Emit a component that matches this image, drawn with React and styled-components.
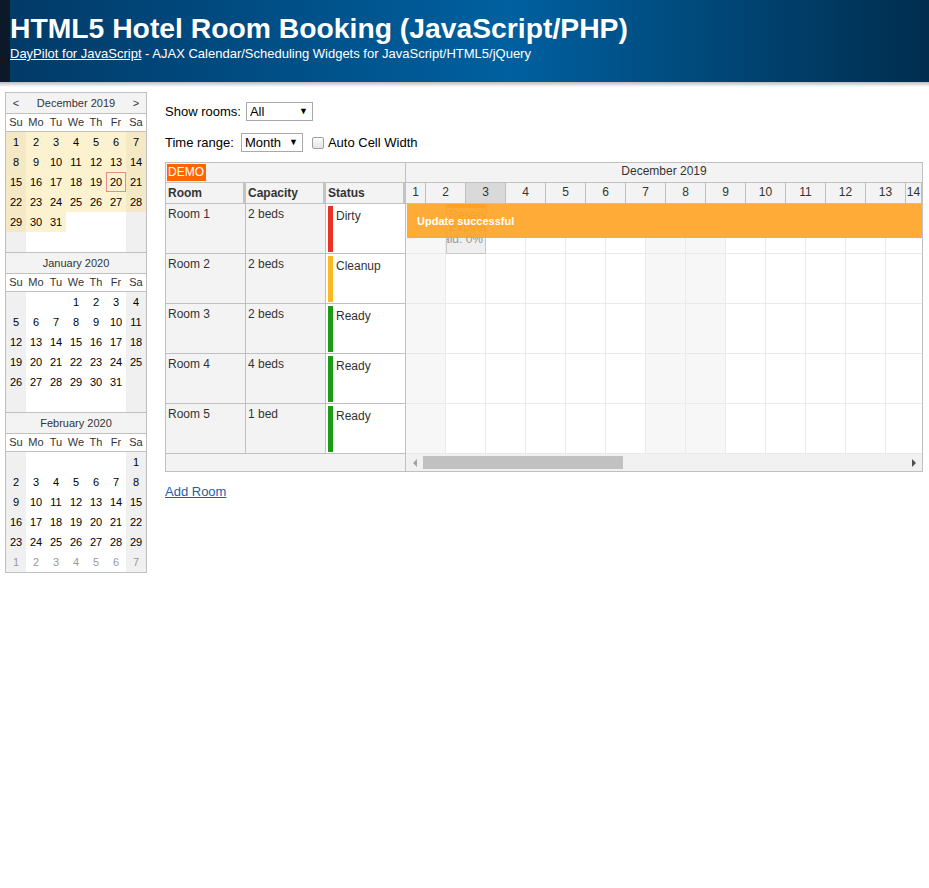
import React from 'react';
import styled, { createGlobalStyle } from 'styled-components';

const GlobalStyle = createGlobalStyle`
  body {
    margin: 0;
    background: #fff;
    color: #000;
    font-family: "Liberation Sans", Arial, sans-serif;
    font-size: 13px;
  }
`;

const FONT = '"Liberation Sans", Arial, sans-serif';

/* ---------- header ---------- */

const Header = styled.header`
  height: 82px;
  box-sizing: border-box;
  padding: 12px 10px 0 10px;
  color: #fff;
  background: linear-gradient(
    to right,
    #0b1929 0,
    #0b1929 10px,
    #023a68 10px,
    #004f86 30%,
    #0060a0 55%,
    #004676 78%,
    #002d4e 100%
  );
`;

const Title = styled.h1`
  margin: 0;
  font-size: 28.3px;
  line-height: 32px;
  font-weight: bold;
`;

const Subtitle = styled.div`
  margin-top: 2px;
  font-size: 13px;
  line-height: 15px;

  a {
    color: #fff;
    text-decoration: underline;
  }
`;

const HeaderShadow = styled.div`
  height: 5px;
  background: linear-gradient(#bcbcbc, #fff);
`;

/* ---------- layout ---------- */

const Main = styled.div`
  display: flex;
  align-items: flex-start;
  gap: 18px;
  padding: 5px 0 0 5px;
`;

const Content = styled.div`
  display: flex;
  flex-direction: column;
  align-items: flex-start;
  padding-top: 10px;
`;

/* ---------- navigator ---------- */

const Nav = styled.div`
  width: 142px;
  box-sizing: border-box;
  border: 1px solid #c0c0c0;
  font-size: 11px;
`;

const Month = styled.div`
  & + & {
    border-top: 1px solid #c0c0c0;
  }
`;

const MonthTitle = styled.div`
  display: grid;
  grid-template-columns: 20px 1fr 20px;
  align-items: center;
  height: 20px;
  background: #f3f3f3;
  color: #333;
  text-align: center;
`;

const NavArrow = styled.span`
  color: #333;
  font-size: 11px;
`;

const DowRow = styled.div`
  display: grid;
  grid-template-columns: repeat(7, 20px);
  height: 17px;
  line-height: 17px;
  border-top: 1px solid #c0c0c0;
  border-bottom: 1px solid #c0c0c0;
  background: #fff;
  color: #333;
  text-align: center;
`;

const DaysGrid = styled.div`
  display: grid;
  grid-template-columns: repeat(7, 20px);
  grid-auto-rows: 20px;
`;

const DayCell = styled.div`
  line-height: 20px;
  text-align: center;
  box-sizing: border-box;
  background: ${({ $bg }) => $bg};
  color: ${({ $muted }) => ($muted ? '#999' : '#000')};
  box-shadow: ${({ $today }) => ($today ? 'inset 0 0 0 1px #ee8a8a' : 'none')};
`;

const months = [
  { title: 'December 2019', start: 0, days: 31, selected: true, arrows: true },
  { title: 'January 2020', start: 3, days: 31 },
  { title: 'February 2020', start: 6, days: 29, trailing: true },
];

const dows = ['Su', 'Mo', 'Tu', 'We', 'Th', 'Fr', 'Sa'];

const cellBg = (weekend, inMonth, selected) => {
  if (selected && inMonth) return weekend ? '#f5e8c4' : '#fdf2d0';
  return weekend ? '#f0f0f0' : '#fff';
};

const NavMonth = ({ m }) => {
  const cells = [];
  for (let i = 0; i < 42; i++) {
    const d = i - m.start + 1;
    const weekend = i % 7 === 0 || i % 7 === 6;
    const inMonth = d >= 1 && d <= m.days;
    let label = '';
    let muted = false;
    if (inMonth) label = d;
    else if (m.trailing && d > m.days) {
      label = d - m.days;
      muted = true;
    }
    cells.push(
      <DayCell
        key={i}
        $bg={cellBg(weekend, inMonth, m.selected)}
        $muted={muted}
        $today={m.selected && d === 20}
      >
        {label}
      </DayCell>
    );
  }
  return (
    <Month>
      <MonthTitle>
        <NavArrow>{m.arrows ? '<' : ''}</NavArrow>
        <span>{m.title}</span>
        <NavArrow>{m.arrows ? '>' : ''}</NavArrow>
      </MonthTitle>
      <DowRow>
        {dows.map((d) => (
          <span key={d}>{d}</span>
        ))}
      </DowRow>
      <DaysGrid>{cells}</DaysGrid>
    </Month>
  );
};

/* ---------- toolbar ---------- */

const ToolRow = styled.div`
  display: flex;
  align-items: center;
  gap: ${({ $gap }) => $gap}px;
  height: 19px;
  margin-bottom: ${({ $mb }) => $mb}px;
`;

const Label = styled.span`
  margin-right: ${({ $mr }) => $mr || 0}px;
`;

const SelectWrap = styled.span`
  position: relative;
  display: inline-block;

  &::after {
    content: '▼';
    position: absolute;
    right: 5px;
    top: 4px;
    font-size: 9px;
    color: #000;
    pointer-events: none;
  }
`;

const Select = styled.select`
  appearance: none;
  -webkit-appearance: none;
  box-sizing: border-box;
  width: ${({ $w }) => $w}px;
  height: 19px;
  margin: 0;
  padding: 0 0 0 3px;
  border: 1px solid #a9a9a9;
  border-radius: 0;
  background: #fff;
  color: #000;
  font-family: ${FONT};
  font-size: 13px;
`;

const Check = styled.input`
  appearance: none;
  -webkit-appearance: none;
  box-sizing: border-box;
  width: 12px;
  height: 12px;
  margin: 0 0 0 5px;
  border: 1px solid #a0a0a0;
  border-radius: 2px;
  background: linear-gradient(#fcfcfc, #e4e4e4);
`;

/* ---------- scheduler ---------- */

const Scheduler = styled.div`
  width: 758px;
  box-sizing: border-box;
  border: 1px solid #c0c0c0;
  display: grid;
  grid-template-columns: 240px 516px;
  grid-template-rows: 20px 21px 250px 17px;
  font-size: 12px;
  color: #333;
`;

const Corner = styled.div`
  box-sizing: border-box;
  padding: 1px;
  background: #f3f3f3;
  border-right: 1px solid #c0c0c0;
  border-bottom: 1px solid #c0c0c0;
`;

const Demo = styled.span`
  display: inline-block;
  padding: 0 2px 0 1px;
  line-height: 17px;
  background: #ff6600;
  color: #fff;
`;

const TimeTop = styled.div`
  box-sizing: border-box;
  background: #f3f3f3;
  border-bottom: 1px solid #c0c0c0;
  text-align: center;
  line-height: 16px;
`;

const ColHeaders = styled.div`
  display: flex;
  border-bottom: 1px solid #c0c0c0;
  background: #f3f3f3;
`;

const ColHeader = styled.div`
  flex: 0 0 80px;
  box-sizing: border-box;
  padding-left: 2px;
  border-right: 3px solid #c4c4c4;
  font-weight: bold;
  line-height: 20px;
`;

const DayHeaders = styled.div`
  display: flex;
  overflow: hidden;
  border-bottom: 1px solid #c0c0c0;
`;

const DayHeader = styled.div`
  flex: 0 0 ${({ $w }) => $w}px;
  box-sizing: border-box;
  border-right: 1px solid #c0c0c0;
  background: ${({ $hot }) => ($hot ? '#d9d9d9' : '#f3f3f3')};
  text-align: center;
  line-height: 18px;
`;

const RowHeaders = styled.div`
  display: flex;
  flex-direction: column;
`;

const RoomRow = styled.div`
  display: flex;
  height: 50px;
  box-sizing: border-box;
  border-bottom: 1px solid #c0c0c0;
`;

const RoomCell = styled.div`
  flex: 0 0 80px;
  box-sizing: border-box;
  padding: 3px 0 0 2px;
  border-right: 1px solid #c0c0c0;
  background: #f3f3f3;
`;

const StatusCell = styled.div`
  flex: 0 0 80px;
  box-sizing: border-box;
  display: flex;
  gap: 3px;
  padding: 2px 0 1px 2px;
  border-right: 1px solid #c0c0c0;
  background: #fff;
`;

const StatusBar = styled.div`
  flex: 0 0 5px;
  background: ${({ $color }) => $color};
`;

const StatusText = styled.div`
  padding-top: 3px;
`;

const Canvas = styled.div`
  position: relative;
  overflow: hidden;
  display: flex;
  flex-direction: column;
`;

const GridRow = styled.div`
  display: flex;
  height: 50px;
  box-sizing: border-box;
  border-bottom: 1px solid #eaeaea;
`;

const GridCell = styled.div`
  flex: 0 0 40px;
  box-sizing: border-box;
  border-right: 1px solid #eaeaea;
  background: ${({ $weekend }) => ($weekend ? '#f7f7f7' : '#fff')};
`;

const Event = styled.div`
  position: absolute;
  left: 40px;
  top: 0;
  width: 40px;
  height: 50px;
  box-sizing: border-box;
  overflow: hidden;
  border: 1px solid #c8c8c8;
  border-top: 4px solid #ff9a2a;
  background: #efefef;
  color: #999;
  padding: 1px 2px 0 2px;
  line-height: 12px;
  font-size: 12px;
`;

const EventLine = styled.div`
  display: flex;
  justify-content: ${({ $right }) => ($right ? 'flex-end' : 'flex-start')};
  white-space: nowrap;
`;

const Toast = styled.div`
  position: absolute;
  left: 1px;
  right: 0;
  top: 0;
  height: 34px;
  padding-left: 10px;
  background: rgba(255, 162, 34, 0.9);
  color: #fff;
  font-weight: bold;
  font-size: 11px;
  line-height: 34px;
`;

const ScrollCorner = styled.div`
  box-sizing: border-box;
  background: #f3f3f3;
  border-right: 1px solid #c0c0c0;
`;

const ScrollBar = styled.div`
  display: flex;
  align-items: center;
  background: #f1f1f1;
`;

const ScrollBtn = styled.div`
  flex: 0 0 17px;
  display: flex;
  align-items: center;
  justify-content: center;
`;

const Thumb = styled.div`
  flex: 0 0 200px;
  height: 13px;
  background: #c1c1c1;
`;

const Spacer = styled.div`
  flex: 1;
`;

const AddLink = styled.a`
  margin-top: 12px;
  color: #1f5ea8;
  font-size: 13px;
  text-decoration: underline;
  cursor: pointer;
`;

const rooms = [
  { name: 'Room 1', cap: '2 beds', status: 'Dirty', color: '#ea3324' },
  { name: 'Room 2', cap: '2 beds', status: 'Cleanup', color: '#fab726' },
  { name: 'Room 3', cap: '2 beds', status: 'Ready', color: '#1b9c14' },
  { name: 'Room 4', cap: '4 beds', status: 'Ready', color: '#1b9c14' },
  { name: 'Room 5', cap: '1 bed', status: 'Ready', color: '#1b9c14' },
];

const headerDays = [];
for (let d = 1; d <= 14; d++) {
  headerDays.push({ d, w: d === 1 ? 20 : d === 14 ? 16 : 40 });
}

const bodyDays = [];
for (let d = 1; d <= 13; d++) {
  const dow = (d - 1) % 7;
  bodyDays.push({ d, weekend: dow === 0 || dow === 6 });
}

const App = () => {
  return (
    <>
      <GlobalStyle />
      <Header>
        <Title>HTML5 Hotel Room Booking (JavaScript/PHP)</Title>
        <Subtitle>
          <a>DayPilot for JavaScript</a> - AJAX Calendar/Scheduling Widgets for JavaScript/HTML5/jQuery
        </Subtitle>
      </Header>
      <HeaderShadow />
      <Main>
        <Nav>
          {months.map((m) => (
            <NavMonth key={m.title} m={m} />
          ))}
        </Nav>
        <Content>
          <ToolRow $mb={12} $gap={5}>
            <Label>Show rooms:</Label>
            <SelectWrap>
              <Select $w={67} defaultValue="all">
                <option value="all">All</option>
              </Select>
            </SelectWrap>
          </ToolRow>
          <ToolRow $mb={10} $gap={4}>
            <Label $mr={3}>Time range:</Label>
            <SelectWrap>
              <Select $w={62} defaultValue="month">
                <option value="month">Month</option>
              </Select>
            </SelectWrap>
            <Check type="checkbox" />
            <Label>Auto Cell Width</Label>
          </ToolRow>

          <Scheduler>
            <Corner>
              <Demo>DEMO</Demo>
            </Corner>
            <TimeTop>December 2019</TimeTop>

            <ColHeaders>
              <ColHeader>Room</ColHeader>
              <ColHeader>Capacity</ColHeader>
              <ColHeader>Status</ColHeader>
            </ColHeaders>
            <DayHeaders>
              {headerDays.map(({ d, w }) => (
                <DayHeader key={d} $w={w} $hot={d === 3}>
                  {d}
                </DayHeader>
              ))}
            </DayHeaders>

            <RowHeaders>
              {rooms.map((r) => (
                <RoomRow key={r.name}>
                  <RoomCell>{r.name}</RoomCell>
                  <RoomCell>{r.cap}</RoomCell>
                  <StatusCell>
                    <StatusBar $color={r.color} />
                    <StatusText>{r.status}</StatusText>
                  </StatusCell>
                </RoomRow>
              ))}
            </RowHeaders>
            <Canvas>
              {rooms.map((r) => (
                <GridRow key={r.name}>
                  {bodyDays.map(({ d, weekend }) => (
                    <GridCell key={d} $weekend={weekend} />
                  ))}
                </GridRow>
              ))}
              <Event>
                <EventLine>Reservation 1</EventLine>
                <EventLine>Expired</EventLine>
                <EventLine $right>Paid: 0%</EventLine>
              </Event>
              <Toast>Update successful</Toast>
            </Canvas>

            <ScrollCorner />
            <ScrollBar>
              <ScrollBtn>
                <svg width="4" height="8" viewBox="0 0 4 8">
                  <path d="M4 0 L0 4 L4 8 Z" fill="#a3a3a3" />
                </svg>
              </ScrollBtn>
              <Thumb />
              <Spacer />
              <ScrollBtn>
                <svg width="4" height="8" viewBox="0 0 4 8">
                  <path d="M0 0 L4 4 L0 8 Z" fill="#505050" />
                </svg>
              </ScrollBtn>
            </ScrollBar>
          </Scheduler>

          <AddLink>Add Room</AddLink>
        </Content>
      </Main>
    </>
  );
};

export default App;
